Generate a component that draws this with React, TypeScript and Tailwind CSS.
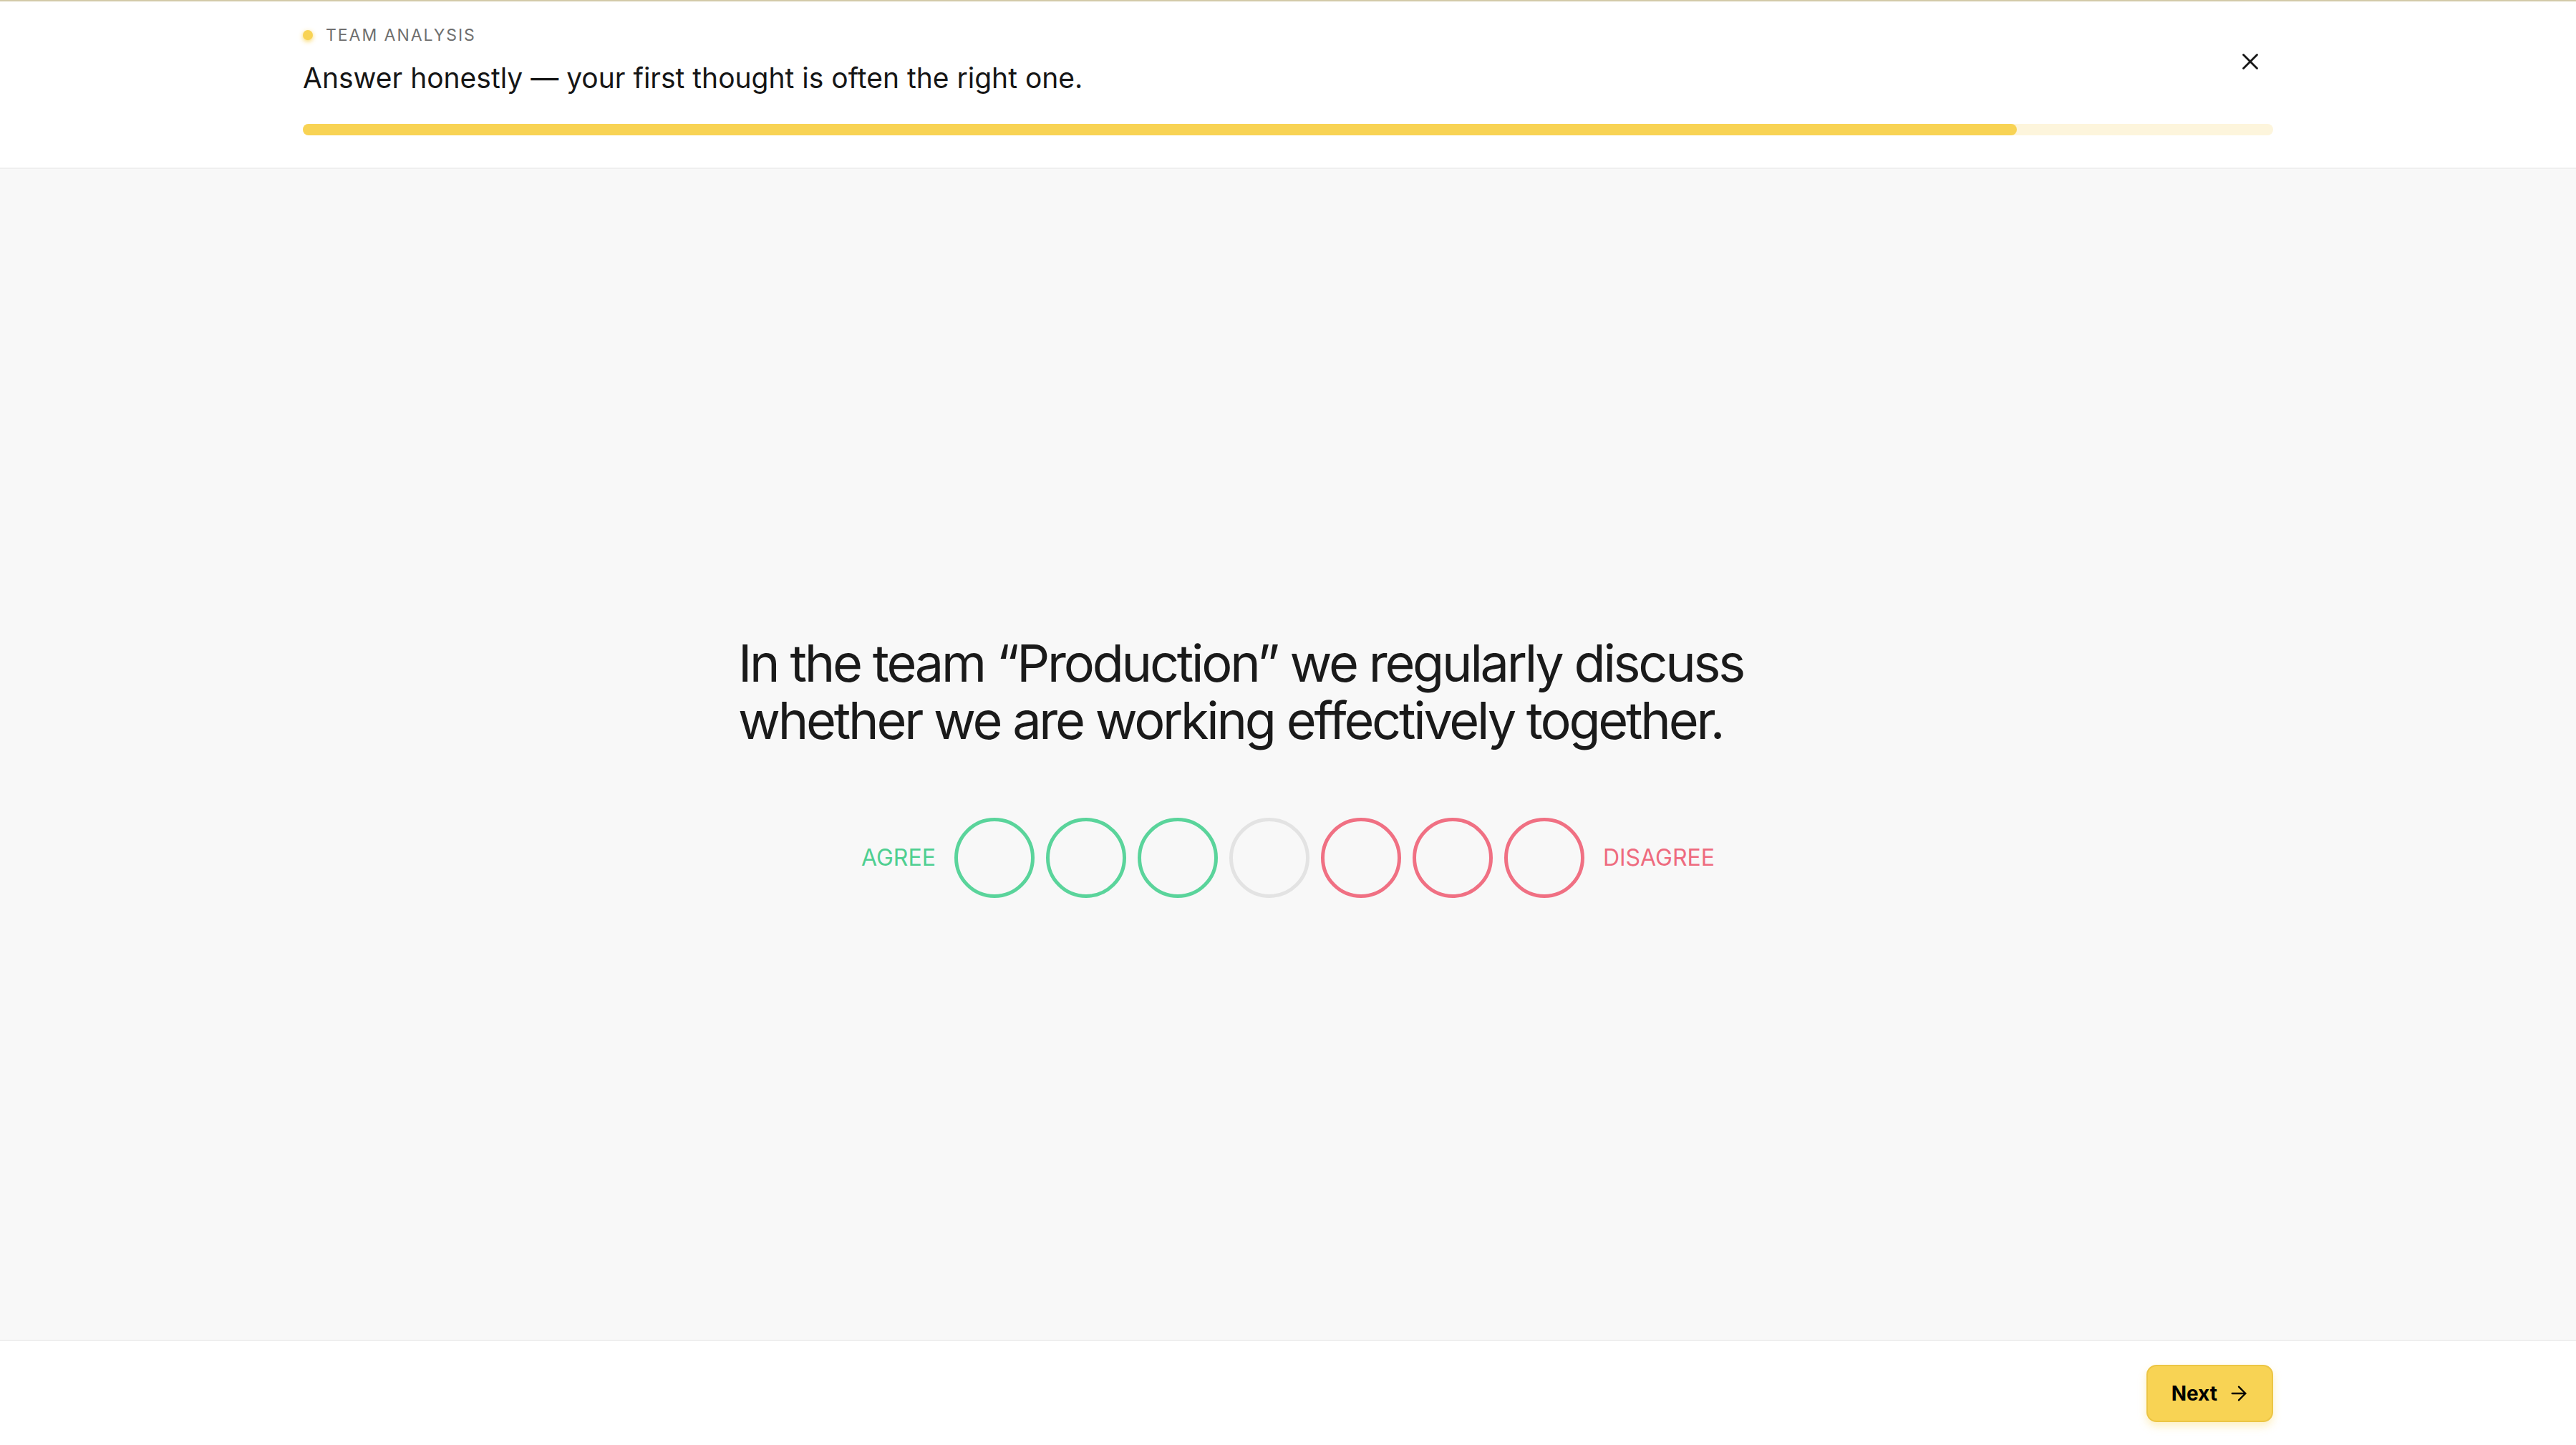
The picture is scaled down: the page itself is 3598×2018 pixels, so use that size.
import React from 'react';
import { X, ArrowRight } from 'lucide-react';

const scale = [
  { tone: 'agree' },
  { tone: 'agree' },
  { tone: 'agree' },
  { tone: 'neutral' },
  { tone: 'disagree' },
  { tone: 'disagree' },
  { tone: 'disagree' },
];

export default function App() {
  return (
    <div
      className="flex h-screen flex-col bg-[#f8f8f8] text-[#1a1a1a]"
      style={{ fontFamily: 'Inter, "Noto Sans", sans-serif' }}
    >
      {/* Header */}
      <header className="shrink-0 border-t-2 border-b-2 border-t-[#d3caa8] border-b-[#efefef] bg-white">
        <div className="mx-auto w-full max-w-[2752px] pt-[33px] pb-[45px]">
          <div className="flex items-center justify-between">
            <div className="flex flex-col gap-[23px]">
              <div className="flex items-center gap-[18px] h-[28px]">
                <span className="h-[14px] w-[14px] rounded-full bg-[#f8d354] shadow-[0_2px_6px_rgba(248,211,84,0.9)]" />
                <span className="text-[23px] leading-[28px] tracking-[0.085em] text-[#6f6f6f]">TEAM ANALYSIS</span>
              </div>
              <h1 className="text-[39px] leading-[46px] font-normal text-[#161616]">
                Answer honestly — your first thought is often the right one.
              </h1>
            </div>
            <button className="mt-[4px] flex h-16 w-16 items-center justify-center text-[#161616]">
              <X size={38} strokeWidth={1.75} />
            </button>
          </div>
          <div className="mt-[41px] h-[16px] w-full rounded-full bg-[#fdf5dc]">
            <div className="h-full w-[87%] rounded-full bg-[#f8d354]" />
          </div>
        </div>
      </header>

      {/* Question */}
      <main className="flex flex-1 flex-col items-center justify-center pt-[33px]">
        <p className="w-[1536px] text-left text-[72px] leading-[80px] font-normal tracking-[-0.045em] text-[#1a1a1a]">
          In the team “Production” we regularly discuss whether we are working effectively together.
        </p>
        <div className="mt-24 flex items-center gap-[26px]">
          <span className="text-[32px] text-[#4fcf91]">AGREE</span>
          <div className="flex items-center gap-[16px]">
            {scale.map((s, i) => (
              <button
                key={i}
                className={
                  'h-[112px] w-[112px] rounded-full border-[5px] bg-transparent ' +
                  (s.tone === 'agree'
                    ? 'border-[#5ad49b]'
                    : s.tone === 'neutral'
                    ? 'border-[#e3e3e3]'
                    : 'border-[#f07083]')
                }
              />
            ))}
          </div>
          <span className="text-[32px] text-[#ee6b7e]">DISAGREE</span>
        </div>
      </main>

      {/* Footer */}
      <footer className="h-[147px] shrink-0 border-t-2 border-[#efefef] bg-white">
        <div className="mx-auto flex h-full w-full max-w-[2752px] items-center justify-end">
          <button className="flex h-[80px] items-center gap-[14px] rounded-[14px] border-2 border-[#ecc544] bg-[#f8d354] pl-[33px] pr-[30px] text-[28px] font-bold text-black shadow-[0_6px_12px_rgba(248,211,84,0.35)]">
            Next
            <ArrowRight size={32} strokeWidth={1.75} />
          </button>
        </div>
      </footer>
    </div>
  );
}
